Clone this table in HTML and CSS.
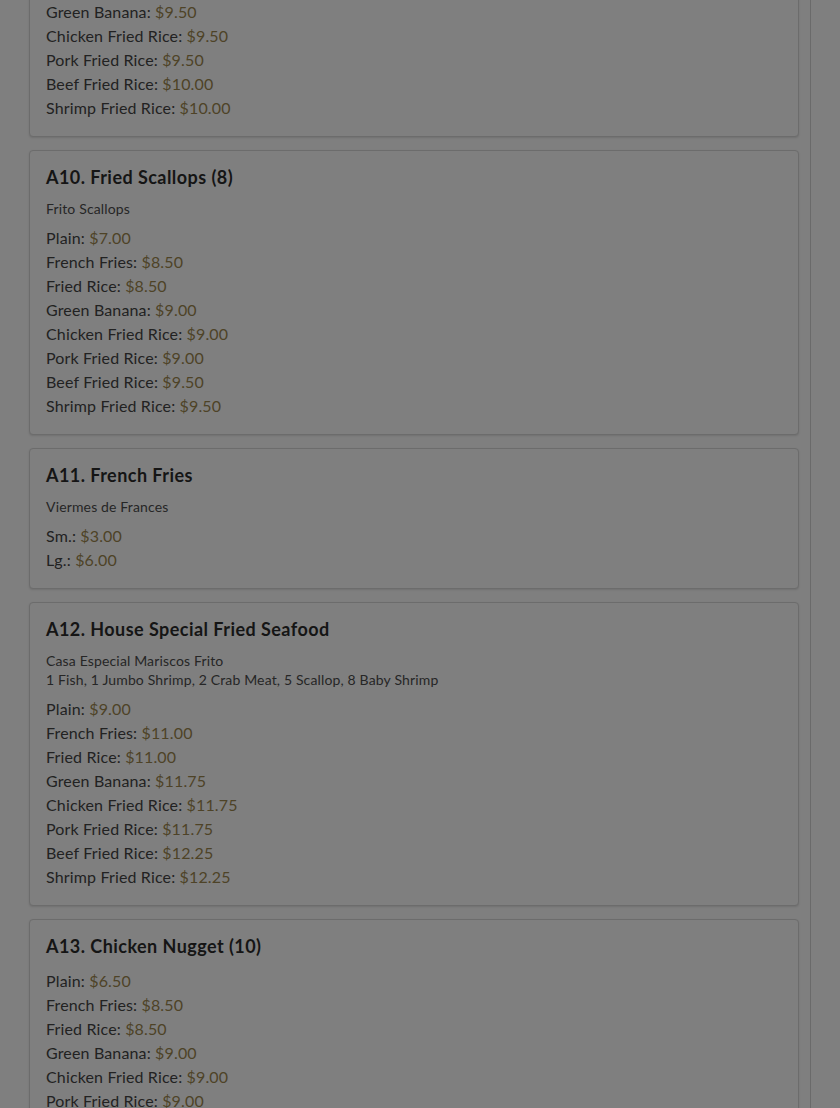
FILE: index.html
```html
<!DOCTYPE html>
<html lang="en">
<head>
<meta charset="utf-8">
<title>Menu</title>
<link rel="stylesheet" href="styles.css">
</head>
<body>
<div class="page">
  <div class="list">
    <section class="card">
      <h3 class="title">A9. Fried Shrimp (10)</h3>
      <div class="sub"><div>Camarones Frito</div></div>
      <ul class="prices">
        <li>Plain: <span class="p">$8.00</span></li>
        <li>French Fries: <span class="p">$9.00</span></li>
        <li>Fried Rice: <span class="p">$9.00</span></li>
        <li>Green Banana: <span class="p">$9.50</span></li>
        <li>Chicken Fried Rice: <span class="p">$9.50</span></li>
        <li>Pork Fried Rice: <span class="p">$9.50</span></li>
        <li>Beef Fried Rice: <span class="p">$10.00</span></li>
        <li>Shrimp Fried Rice: <span class="p">$10.00</span></li>
      </ul>
    </section>
    <section class="card">
      <h3 class="title">A10. Fried Scallops (8)</h3>
      <div class="sub"><div>Frito Scallops</div></div>
      <ul class="prices">
        <li>Plain: <span class="p">$7.00</span></li>
        <li>French Fries: <span class="p">$8.50</span></li>
        <li>Fried Rice: <span class="p">$8.50</span></li>
        <li>Green Banana: <span class="p">$9.00</span></li>
        <li>Chicken Fried Rice: <span class="p">$9.00</span></li>
        <li>Pork Fried Rice: <span class="p">$9.00</span></li>
        <li>Beef Fried Rice: <span class="p">$9.50</span></li>
        <li>Shrimp Fried Rice: <span class="p">$9.50</span></li>
      </ul>
    </section>
    <section class="card">
      <h3 class="title">A11. French Fries</h3>
      <div class="sub"><div>Viermes de Frances</div></div>
      <ul class="prices">
        <li>Sm.: <span class="p">$3.00</span></li>
        <li>Lg.: <span class="p">$6.00</span></li>
      </ul>
    </section>
    <section class="card">
      <h3 class="title">A12. House Special Fried Seafood</h3>
      <div class="sub"><div>Casa Especial Mariscos Frito</div><div>1 Fish, 1 Jumbo Shrimp, 2 Crab Meat, 5 Scallop, 8 Baby Shrimp</div></div>
      <ul class="prices">
        <li>Plain: <span class="p">$9.00</span></li>
        <li>French Fries: <span class="p">$11.00</span></li>
        <li>Fried Rice: <span class="p">$11.00</span></li>
        <li>Green Banana: <span class="p">$11.75</span></li>
        <li>Chicken Fried Rice: <span class="p">$11.75</span></li>
        <li>Pork Fried Rice: <span class="p">$11.75</span></li>
        <li>Beef Fried Rice: <span class="p">$12.25</span></li>
        <li>Shrimp Fried Rice: <span class="p">$12.25</span></li>
      </ul>
    </section>
    <section class="card">
      <h3 class="title nosub">A13. Chicken Nugget (10)</h3>
      <ul class="prices">
        <li>Plain: <span class="p">$6.50</span></li>
        <li>French Fries: <span class="p">$8.50</span></li>
        <li>Fried Rice: <span class="p">$8.50</span></li>
        <li>Green Banana: <span class="p">$9.00</span></li>
        <li>Chicken Fried Rice: <span class="p">$9.00</span></li>
        <li>Pork Fried Rice: <span class="p">$9.00</span></li>
        <li>Beef Fried Rice: <span class="p">$9.50</span></li>
        <li>Shrimp Fried Rice: <span class="p">$9.50</span></li>
      </ul>
    </section>
  </div>
</div>
</body>
</html>
```

FILE: styles.css
```css
html, body {
  margin: 0;
  padding: 0;
  background: #7f7f7f;
  height: 100%;
  overflow: hidden;
}
body {
  font-family: Lato, "Noto Sans", sans-serif;
  color: #222222;
}
.page {
  width: 811px;
  height: 100%;
  border-right: 1px solid #6a6a6a;
  box-sizing: border-box;
  overflow: hidden;
}
.list {
  margin-top: -148px;
  padding: 0 11px 0 29px;
  display: flex;
  flex-direction: column;
  gap: 13px;
}
.card {
  border: 1px solid #6c6c6c;
  border-radius: 4px;
  padding: 16px;
  background: #7f7f7f;
  box-shadow: 0 1px 2px rgba(0, 0, 0, 0.12);
}
.title {
  margin: 0 0 12px;
  font-size: 18px;
  line-height: 20px;
  font-weight: 700;
  letter-spacing: 0.45px;
  color: #151515;
}
.title.nosub {
  margin-bottom: 13px;
}
.sub {
  font-size: 14px;
  line-height: 19px;
  letter-spacing: 0.15px;
  color: #262626;
  margin-bottom: 8px;
}
.prices {
  list-style: none;
  margin: 0;
  padding: 0;
  font-size: 16px;
  line-height: 24px;
  letter-spacing: 0.15px;
}
.p {
  color: #4e4327;
}
```
